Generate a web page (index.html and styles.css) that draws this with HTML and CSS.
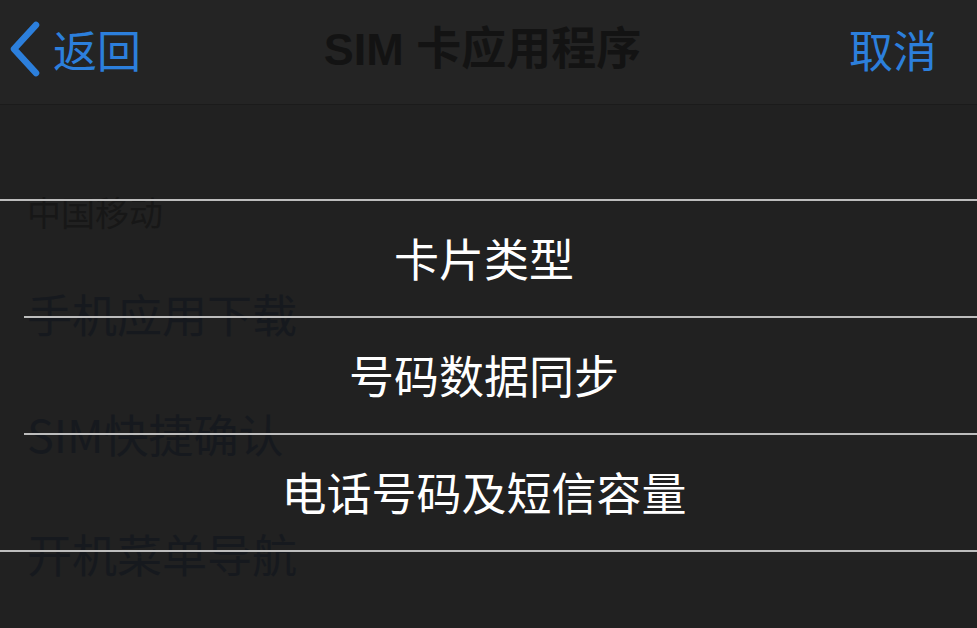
FILE: index.html
```html
<!DOCTYPE html>
<html lang="zh-CN">
<head>
<meta charset="utf-8">
<title>SIM 卡应用程序</title>
<link rel="stylesheet" href="styles.css">
</head>
<body>
<header class="navbar">
  <a class="nav-back">
    <svg class="chevron" width="34" height="56" viewBox="0 0 34 56" aria-hidden="true">
      <path d="M28 4 L6 28 L28 52" fill="none" stroke="#2c7fdc" stroke-width="6.5" stroke-linecap="round" stroke-linejoin="round"/>
    </svg>
    <span>返回</span>
  </a>
  <h1 class="nav-title">SIM 卡应用程序</h1>
  <a class="nav-cancel">取消</a>
</header>

<main class="screen">
  <section class="menu">
    <div class="menu-header">中国移动</div>
    <div class="menu-item">手机应用下载</div>
    <div class="menu-item">SIM快捷确认</div>
    <div class="menu-item">开机菜单导航</div>
  </section>

  <div class="sheet">
    <div class="sheet-row">卡片类型</div>
    <div class="sheet-row">号码数据同步</div>
    <div class="sheet-row sheet-row-last">电话号码及短信容量</div>
  </div>
</main>
</body>
</html>
```

FILE: styles.css
```css
html, body {
  margin: 0;
  padding: 0;
}

body {
  width: 977px;
  height: 628px;
  overflow: hidden;
  background: #212121;
  font-family: "Noto Sans CJK SC", "Noto Sans", sans-serif;
}

/* top navigation bar */
.navbar {
  height: 105px;
  box-sizing: border-box;
  background: #242424;
  border-bottom: 1px solid #1b1b1b;
  display: grid;
  grid-template-columns: 1fr auto 1fr;
  align-items: center;
  padding: 0 40px 6px 8px;
}

.nav-back {
  display: flex;
  align-items: center;
  gap: 11px;
  color: #2c7fdc;
  font-size: 44px;
  line-height: 1;
  justify-self: start;
}

.chevron {
  display: block;
}

.nav-title {
  margin: 0;
  font-family: "Liberation Sans", "Noto Sans CJK SC", sans-serif;
  font-size: 45px;
  font-weight: 700;
  color: #131313;
  line-height: 1;
  transform: translateX(10px);
}

.nav-cancel {
  justify-self: end;
  color: #2c7fdc;
  font-size: 44px;
  line-height: 1;
}

/* dimmed list behind the action sheet */
.screen {
  position: relative;
  height: 522px;
}

.menu {
  padding: 90px 0 0 27px;
  color: #16191e;
}

.menu-header {
  font-size: 34px;
  line-height: 34px;
  height: 34px;
  margin-bottom: 25px;
  color: #171717;
}

.menu-item {
  font-size: 45px;
  height: 120px;
  line-height: 120px;
}

/* action sheet laid over the list */
.sheet {
  position: absolute;
  top: 94px;
  left: 0;
  right: 0;
  border-top: 2px solid #bdbdbd;
}

.sheet-row {
  position: relative;
  height: 117px;
  box-sizing: border-box;
  padding: 0 9px 4px 0;
  display: flex;
  align-items: center;
  justify-content: center;
  color: #ffffff;
  font-size: 45px;
  line-height: 1;
}

.sheet-row::after {
  content: "";
  position: absolute;
  left: 24px;
  right: 0;
  bottom: 0;
  height: 2px;
  background: #bdbdbd;
}

.sheet-row-last::after {
  left: 0;
}
```
